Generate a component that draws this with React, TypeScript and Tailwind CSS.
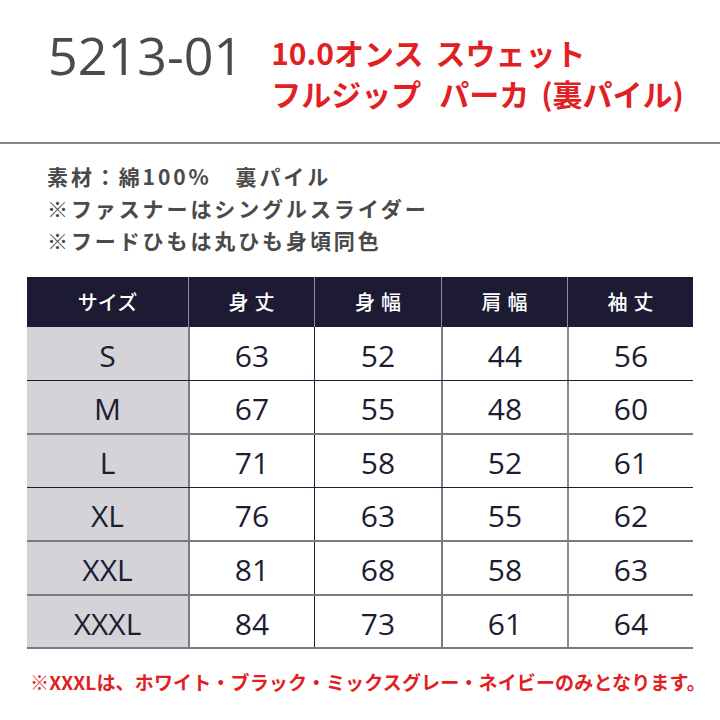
import React from 'react';

const jp = "font-['Noto_Sans_CJK_JP',sans-serif]";
const num = "font-['Open_Sans',sans-serif]";

const columns = ['サイズ', '身丈', '身幅', '肩幅', '袖丈'];

// size rows; line styles copied from the artwork (dark hairline vs grey rule)
const rows = [
  { size: 'S', values: ['63', '52', '44', '56'], line: '', h: 'h-[53px]' },
  { size: 'M', values: ['67', '55', '48', '60'], line: 'border-t border-[#1c1c33]', h: 'h-[53px]' },
  { size: 'L', values: ['71', '58', '52', '61'], line: 'border-t-2 border-[#7a7a82]', h: 'h-[54px]' },
  { size: 'XL', values: ['76', '63', '55', '62'], line: 'border-t border-[#1c1c33]', h: 'h-[53px]' },
  { size: 'XXL', values: ['81', '68', '58', '63'], line: 'border-t-2 border-[#7a7a82]', h: 'h-[54px]' },
  { size: 'XXXL', values: ['84', '73', '61', '64'], line: 'border-t-2 border-b-2 border-[#7a7a82]', h: 'h-[55px]' },
];

const colLines = [
  'border-l-2 border-[#7a7a84]',
  'border-l border-[#1c1c33]',
  'border-l-2 border-[#7a7a84]',
  'border-l-2 border-[#8a8a92]',
];

const gridCols = 'grid grid-cols-[161px_126px_127px_126px_126px]';

function SizeTable() {
  return (
    <div className="mx-[27px] w-[666px]">
      <div className={`${gridCols} h-[50px] bg-[#1c1b33]`}>
        {columns.map((c, i) => (
          <div
            key={c}
            className={`flex items-center justify-center text-white text-[20px] font-medium ${jp} ${
              i === 0 ? '' : 'border-l border-[#8c8c9c] tracking-[6px] pl-[6px]'
            }`}
          >
            {c}
          </div>
        ))}
      </div>
      {rows.map((r) => (
        <div key={r.size} className={`${gridCols} ${r.h} ${r.line}`}>
          <div className={`flex items-center justify-center pt-[4px] bg-[#d3d3d8] text-[30px] leading-none text-[#1c1c33] ${num}`}>
            {r.size}
          </div>
          {r.values.map((v, i) => (
            <div
              key={i}
              className={`flex items-center justify-center pt-[4px] text-[30px] leading-none text-[#1c1c33] ${num} ${colLines[i]}`}
            >
              {v}
            </div>
          ))}
        </div>
      ))}
    </div>
  );
}

export default function App() {
  return (
    <div className="w-[720px] h-[720px] bg-white overflow-hidden">
      <div className="h-[142px] flex items-start pl-[48px]">
        <div className={`mt-[29px] text-[52px] leading-[52px] text-[#4a4a4a] ${num}`}>5213-01</div>
        <div className={`mt-[32px] ml-[28px] text-[30px] leading-[41px] font-bold text-[#e11f24] ${jp}`}>
          <div>
            <span>10.0オンス</span>
            <span className="ml-[12px]">スウェット</span>
          </div>
          <div>
            <span>フルジップ</span>
            <span className="ml-[18px]">パーカ</span>
            <span className="ml-[12px]">(裏パイル)</span>
          </div>
        </div>
      </div>
      <div className="h-[2px] bg-[#858585]" />

      <div className={`pt-[16px] pl-[47px] text-[21px] leading-[32px] font-bold tracking-[2.9px] text-[#4a4a4a] ${jp}`}>
        <div>素材：綿100%　裏パイル</div>
        <div>※ファスナーはシングルスライダー</div>
        <div>※フードひもは丸ひも身頃同色</div>
      </div>

      <div className="mt-[21px]">
        <SizeTable />
      </div>

      <div className={`mt-[21px] pl-[30px] text-[19px] leading-[24px] font-bold tracking-[0.15px] text-[#e11f24] ${jp}`}>
        ※XXXLは、ホワイト・ブラック・ミックスグレー・ネイビーのみとなります。
      </div>
    </div>
  );
}
